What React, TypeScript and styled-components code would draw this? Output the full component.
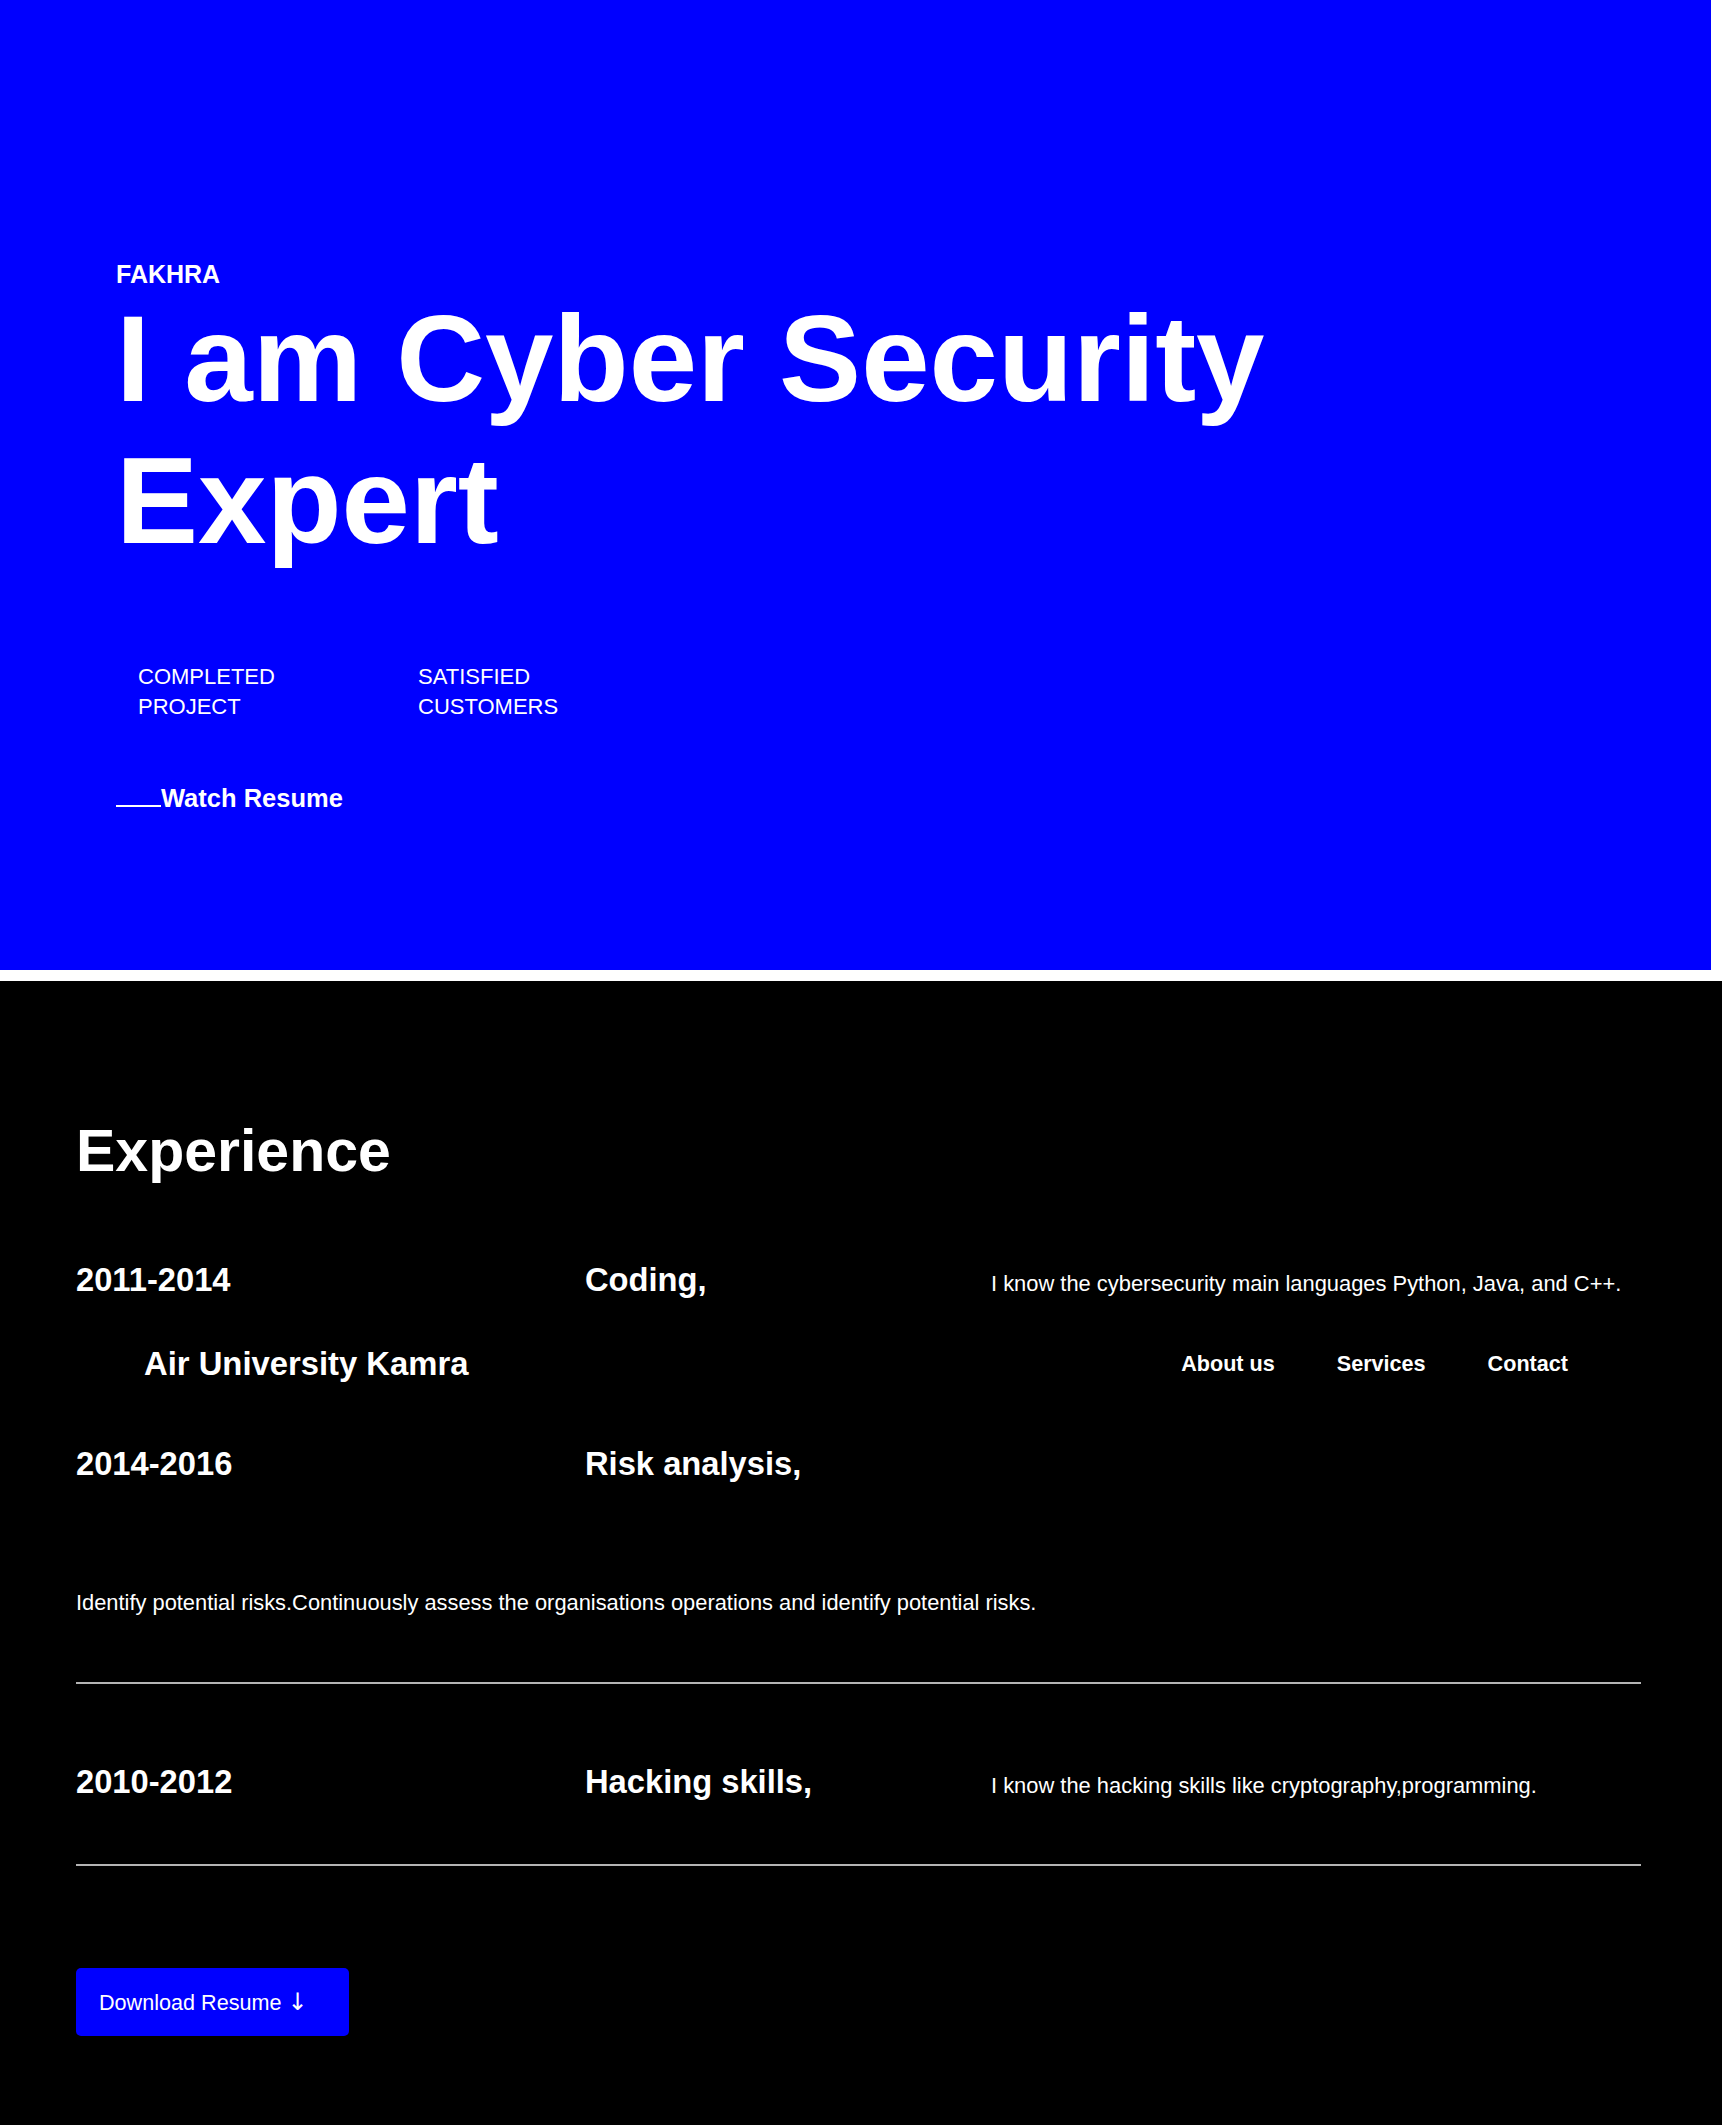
import React from "react";
import styled, { createGlobalStyle } from "styled-components";

const GlobalStyle = createGlobalStyle`
  html, body {
    margin: 0;
    padding: 0;
    background: #ffffff;
  }
  body {
    font-family: "Liberation Sans", Arial, Helvetica, sans-serif;
    color: #ffffff;
  }
  * { box-sizing: border-box; }
`;

const Page = styled.div`
  display: flex;
  flex-direction: column;
  width: 100%;
`;

const Hero = styled.section`
  width: 1711px;
  height: 970px;
  background: #0000ff;
  margin-bottom: 11px;
  padding: 260px 0 0 116px;
  display: flex;
  flex-direction: column;
  align-items: flex-start;
`;

const Eyebrow = styled.div`
  font-size: 25px;
  font-weight: 700;
  line-height: 28px;
`;

const HeroTitle = styled.h1`
  margin: 0;
  max-width: 1250px;
  font-size: 123px;
  font-weight: 700;
  line-height: 142px;
`;

const Stats = styled.div`
  display: flex;
  margin-top: 90px;
  padding-left: 22px;
`;

const Stat = styled.div`
  width: 280px;
  font-size: 22px;
  line-height: 30px;
  text-transform: uppercase;
`;

const WatchLink = styled.a`
  margin-top: 61px;
  font-size: 25.5px;
  font-weight: 700;
  line-height: 30px;
  color: #ffffff;
  text-decoration: none;
  display: inline-flex;
  align-items: baseline;
`;

const Dash = styled.span`
  display: inline-block;
  width: 45px;
  height: 2px;
  background: #ffffff;
  vertical-align: baseline;
`;

const Dark = styled.section`
  background: #000000;
  width: 100%;
  padding: 136px 81px 92px 76px;
  display: flex;
  flex-direction: column;
  align-items: stretch;
`;

const SectionTitle = styled.h2`
  margin: 0;
  font-size: 59px;
  font-weight: 700;
  line-height: 69px;
`;

const Row = styled.div<{ $mt: number }>`
  display: grid;
  grid-template-columns: 509px 406px 1fr;
  align-items: baseline;
  margin-top: ${(p) => p.$mt}px;
`;

const Year = styled.div`
  font-size: 32.7px;
  font-weight: 700;
  line-height: 37px;
`;

const Role = styled.div`
  font-size: 32.7px;
  font-weight: 700;
  line-height: 37px;
`;

const Desc = styled.p`
  margin: 0;
  font-size: 21.9px;
  line-height: 25px;
`;

const BrandBar = styled.header<{ $mt: number }>`
  display: flex;
  justify-content: space-between;
  align-items: center;
  margin-top: ${(p) => p.$mt}px;
  padding: 0 73px 0 68px;
`;

const Brand = styled.div`
  font-size: 32.8px;
  font-weight: 700;
  line-height: 37px;
`;

const Nav = styled.nav`
  display: flex;
  gap: 62px;
`;

const NavLink = styled.a`
  font-size: 21.6px;
  font-weight: 700;
  line-height: 25px;
  color: #ffffff;
  text-decoration: none;
`;

const Paragraph = styled.p<{ $mt: number }>`
  margin: ${(p) => p.$mt}px 0 0;
  font-size: 21.85px;
  line-height: 25px;
`;

const Divider = styled.hr<{ $mt: number }>`
  margin: ${(p) => p.$mt}px 0 0;
  height: 0;
  border: none;
  border-top: 2px solid #b4b4b4;
  width: 100%;
`;

const DownloadButton = styled.button<{ $mt: number }>`
  margin-top: ${(p) => p.$mt}px;
  align-self: flex-start;
  width: 273px;
  height: 68px;
  padding: 0 0 0 23px;
  border: none;
  border-radius: 5px;
  background: #0000ff;
  color: #ffffff;
  font-family: "Liberation Sans", Arial, sans-serif;
  font-size: 21.6px;
  line-height: 25px;
  text-align: left;
  cursor: pointer;
`;

const Arrow = styled.span`
  font-family: "DejaVu Sans", sans-serif;
  font-size: 24px;
  line-height: 20px;
`;

export default function App() {
  return (
    <Page>
      <GlobalStyle />
      <Hero>
        <Eyebrow>FAKHRA</Eyebrow>
        <HeroTitle>I am Cyber Security Expert</HeroTitle>
        <Stats>
          <Stat>
            Completed
            <br />
            Project
          </Stat>
          <Stat>
            Satisfied
            <br />
            Customers
          </Stat>
        </Stats>
        <WatchLink href="#">
          <Dash />
          Watch Resume
        </WatchLink>
      </Hero>

      <Dark>
        <SectionTitle>Experience</SectionTitle>

        <Row $mt={75}>
          <Year>2011-2014</Year>
          <Role>Coding,</Role>
          <Desc>I know the cybersecurity main languages Python, Java, and C++.</Desc>
        </Row>

        <BrandBar $mt={47}>
          <Brand>Air University Kamra</Brand>
          <Nav>
            <NavLink href="#">About us</NavLink>
            <NavLink href="#">Services</NavLink>
            <NavLink href="#">Contact</NavLink>
          </Nav>
        </BrandBar>

        <Row $mt={63}>
          <Year>2014-2016</Year>
          <Role>Risk analysis,</Role>
        </Row>

        <Paragraph $mt={108}>
          Identify potential risks.Continuously assess the organisations operations and identify potential risks.
        </Paragraph>

        <Divider $mt={67} />

        <Row $mt={79}>
          <Year>2010-2012</Year>
          <Role>Hacking skills,</Role>
          <Desc>I know the hacking skills like cryptography,programming.</Desc>
        </Row>

        <Divider $mt={64} />

        <DownloadButton $mt={102}>
          Download Resume <Arrow>↓</Arrow>
        </DownloadButton>
      </Dark>
    </Page>
  );
}
